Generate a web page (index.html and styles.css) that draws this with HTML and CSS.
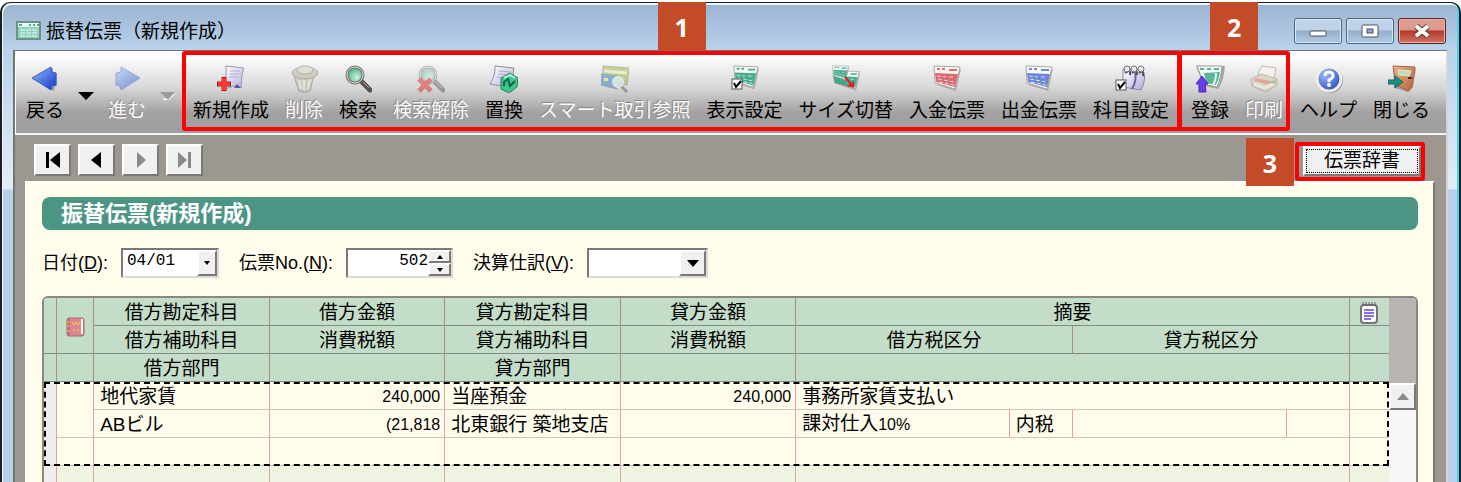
FILE: index.html
```html
<!DOCTYPE html>
<html lang="ja">
<head>
    <meta charset="UTF-8">
    <meta name="viewport" content="width=device-width, initial-scale=1.0">
    <title>振替伝票（新規作成）</title>
    <link rel="stylesheet" href="styles.css">
</head>
<body>

<!-- shared shapes for the toolbar icons -->
<svg class="defs" aria-hidden="true">
    <defs>
        <linearGradient id="blue" x1="0" y1="0" x2="1" y2="1">
            <stop offset="0" stop-color="#8fc4fb"/>
            <stop offset="1" stop-color="#1330c8"/>
        </linearGradient>
        <linearGradient id="paper" x1="0" y1="0" x2="1" y2="1">
            <stop offset="0" stop-color="#ffffff"/>
            <stop offset="1" stop-color="#b3abdc"/>
        </linearGradient>
        <linearGradient id="door" x1="0" y1="0" x2="1" y2="1">
            <stop offset="0" stop-color="#efb38b"/>
            <stop offset="1" stop-color="#b5603a"/>
        </linearGradient>
        <radialGradient id="glass" cx="0.6" cy="0.65" r="0.7">
            <stop offset="0" stop-color="#c9f7dd"/>
            <stop offset="1" stop-color="#3fa57b"/>
        </radialGradient>
        <radialGradient id="ball" cx="0.35" cy="0.3" r="0.8">
            <stop offset="0" stop-color="#9dbcf8"/>
            <stop offset="1" stop-color="#2746b8"/>
        </radialGradient>
        <symbol id="slip" viewBox="0 0 28 28">
            <path d="M2 2 L28 4 L23 26 L4 20Z" fill="#8d8a86" opacity=".6"/>
            <path d="M1 1 L27 2 L22 24 L2 18Z" fill="#fbfbf6" stroke="#aaa69c"/>
            <path d="M2 8 L25 9 L22 22 L3 17Z" fill="currentColor"/>
            <path d="M4 4h3M9 4h3M16 5h8" stroke="currentColor" stroke-width="2"/>
            <path d="M4 11l9 1M16 12h6M5 14l16 3M6 17l15 3" stroke="#fff" stroke-width="1" stroke-dasharray="4 2" opacity=".75"/>
        </symbol>
        <symbol id="check" viewBox="0 0 12 12">
            <rect x="1" y="1" width="10" height="10" fill="#fff" stroke="#555"/>
            <path d="M3 5l2 4 5-6" fill="none" stroke="#000" stroke-width="2"/>
        </symbol>
        <symbol id="lens" viewBox="0 0 28 28">
            <path d="M17 16 L26 25" stroke="#55524e" stroke-width="5" stroke-linecap="round"/>
            <path d="M19 17 L25 23" stroke="#aaa69e" stroke-width="1"/>
            <circle cx="11" cy="10" r="8" fill="url(#glass)" stroke="#77746d" stroke-width="3"/>
            <circle cx="11" cy="10" r="8" fill="none" stroke="#d8d6cf" stroke-width="1"/>
        </symbol>
    </defs>
</svg>

<div class="window">
    <header class="titlebar">
        <svg class="title-icon" viewBox="0 0 25 19">
            <rect x="1" y="1" width="23" height="17" fill="#8fd3bd" stroke="#6d8f89" stroke-width="2"/>
            <rect x="2" y="2" width="21" height="4" fill="#e8fbf5"/>
            <path d="M3 4h3M13 4h2M17 4h2M21 4h2" stroke="#4aa58a" stroke-width="2"/>
            <path d="M4 9h17M4 12h17M4 15h17" stroke="#e8fbf5" stroke-dasharray="5 1"/>
        </svg>
        <h1>振替伝票（新規作成）</h1>
        <div class="window-controls">
            <button type="button" aria-label="最小化">
                <svg viewBox="0 0 20 16"><rect x="2" y="8" width="16" height="5" rx="1" fill="#fff" stroke="#4b5563"/></svg>
            </button>
            <button type="button" aria-label="最大化">
                <svg viewBox="0 0 20 16"><rect x="2" y="2" width="16" height="12" rx="1" fill="#fff" stroke="#4b5563"/><rect x="7" y="6" width="6" height="4" fill="#8ba6c6" stroke="#4b5563"/></svg>
            </button>
            <button type="button" class="close" aria-label="ウィンドウを閉じる">
                <svg viewBox="0 0 20 16"><path d="M4 3l12 10M16 3L4 13" stroke="#5c3a3a" stroke-width="6"/><path d="M4 3l12 10M16 3L4 13" stroke="#fff" stroke-width="4"/></svg>
            </button>
        </div>
    </header>

    <div class="app">
        <nav class="toolbar" aria-label="ツールバー">
            <div class="group history">
                <button type="button" class="tool">
                    <svg viewBox="0 0 28 28"><path d="M2 14 L19 4 L22 3 L22 8 L26 8 L26 21 L24 21 L23 26Z" fill="#777" opacity=".6"/><path d="M1 13 L20 2 L21 7 L25 8 L25 20 L21 21 L20 25Z" fill="url(#blue)" stroke="#3d5bc4"/></svg>
                    <span>戻る</span>
                </button>
                <button type="button" class="drop" aria-label="戻る履歴"><svg viewBox="0 0 16 8"><path d="M0 0h16L8 8z" fill="#000"/></svg></button>
                <button type="button" class="tool" disabled>
                    <svg viewBox="0 0 28 28"><path d="M27 13 L8 2 L8 7 L3 8 L3 20 L7 21 L8 25Z" fill="url(#blue)" stroke="#3d5bc4"/></svg>
                    <span>進む</span>
                </button>
                <button type="button" class="drop" aria-label="進む履歴" disabled><svg viewBox="0 0 16 8"><path d="M2 8 L9 8 L16 1z" fill="#fff"/><path d="M0 0h15L8 8z" fill="#9b9b9b"/></svg></button>
            </div>

            <div class="group marked edit">
                <span class="badge">1</span>
                <button type="button" class="tool">
                    <svg viewBox="0 0 28 28"><path d="M9 1 L27 3 C24 10 25 16 24 23 L17 21 L8 24 C7 16 10 9 9 1Z" fill="url(#paper)" stroke="#9b98a2"/><path d="M13 6h10M13 9h9M12 12h9" stroke="#b4b1cc"/><path d="M17 23l3-4 4 4z" fill="#5a55a5"/><path d="M7 12v14M0 19h14" stroke="#9c1c1c" stroke-width="5"/><path d="M7 13v12M1 19h12" stroke="#f63c32" stroke-width="4"/></svg>
                    <span>新規作成</span>
                </button>
                <button type="button" class="tool" disabled>
                    <svg viewBox="0 0 28 28"><path d="M4 11 L24 10 L20 26 Q14 29 9 26Z" fill="#b9b29d" stroke="#6f6a5c"/><path d="M9 15l2 9M14 15v10M20 14l-2 10" stroke="#f4f1e6" stroke-width="2"/><ellipse cx="15" cy="8" rx="13" ry="6" fill="#b0aa94" stroke="#6f6a5c"/><ellipse cx="15" cy="5" rx="8" ry="4" fill="#d4cebc" stroke="#6f6a5c"/></svg>
                    <span>削除</span>
                </button>
                <button type="button" class="tool">
                    <svg viewBox="0 0 28 28"><use href="#lens"/></svg>
                    <span>検索</span>
                </button>
                <button type="button" class="tool" disabled>
                    <svg viewBox="0 0 28 28"><use href="#lens"/><path d="M2 14l12 12M14 14L2 26" stroke="#e01212" stroke-width="5"/></svg>
                    <span>検索解除</span>
                </button>
                <button type="button" class="tool">
                    <svg viewBox="0 0 28 28"><path d="M5 1 L24 3 L21 23 L0 19 C4 13 5 8 5 1Z" fill="url(#paper)" stroke="#8f8c98"/><path d="M9 6l11 1M8 9l11 1M7 12l8 1" stroke="#aaa7c6"/><path d="M11 13 L20 8 L28 13 L27 22 L19 28 L11 24Z" fill="#39c78d" stroke="#2b7f60"/><path d="M14 21v-4l4-3 2 7 5-5" fill="none" stroke="#17624a" stroke-width="2"/><path d="M14 13l6-3 5 3" fill="none" stroke="#b6f2d5" stroke-width="2"/></svg>
                    <span>置換</span>
                </button>
                <button type="button" class="tool" disabled>
                    <svg viewBox="0 0 28 28"><path d="M2 1 L28 3 L26 20 L2 17Z" fill="#8db32d" stroke="#6b7a3d"/><path d="M3 6l23 2" stroke="#e7f0b5" stroke-width="3"/><path d="M0 9 L17 11 L16 24 L0 20Z" fill="#1878bd" stroke="#2f628a"/><path d="M3 13h4v3H3z" fill="#ffe34d"/><path d="M20 21l6 6" stroke="#555" stroke-width="3"/><circle cx="17" cy="17" r="5" fill="#b8eed6" stroke="#eee" stroke-width="2"/></svg>
                    <span>スマート取引参照</span>
                </button>
                <button type="button" class="tool">
                    <svg class="green" viewBox="0 0 28 28"><use href="#slip" x="2" y="0" width="26" height="26"/><use href="#check" x="0" y="13" width="12" height="12"/></svg>
                    <span>表示設定</span>
                </button>
                <button type="button" class="tool">
                    <svg class="green" viewBox="0 0 28 28"><use href="#slip" x="6" y="5" width="22" height="22"/><path d="M1 10 L12 12 L18 22 L3 18Z" fill="#39a98b" stroke="#8b9d96"/><use href="#slip" x="0" y="0" width="17" height="17"/><path d="M13 12l6 7" stroke="#e21c1c" stroke-width="2"/><path d="M15 21l7 2 0-7z" fill="#e21c1c"/></svg>
                    <span>サイズ切替</span>
                </button>
                <button type="button" class="tool">
                    <svg class="red" viewBox="0 0 28 28"><use href="#slip"/></svg>
                    <span>入金伝票</span>
                </button>
                <button type="button" class="tool">
                    <svg class="blue" viewBox="0 0 28 28"><use href="#slip"/></svg>
                    <span>出金伝票</span>
                </button>
                <button type="button" class="tool">
                    <svg class="wide" viewBox="0 0 32 28"><path d="M8 4 L28 5 Q32 14 26 25 L8 22Z" fill="url(#paper)" stroke="#8784a0"/><path d="M20 6 Q22 16 17 24" fill="none" stroke="#6b6698" stroke-width="2"/><path d="M10 8q6-5 5 2M17 8q5-5 5 2M24 8q5-4 4 3" fill="none" stroke="#4f4d55" stroke-width="2"/><g fill="#eceaf0" stroke="#706d76"><circle cx="12" cy="4" r="3"/><circle cx="19" cy="4" r="3"/><circle cx="26" cy="4" r="3"/></g><use href="#check" x="0" y="14" width="12" height="12"/></svg>
                    <span>科目設定</span>
                </button>
            </div>

            <div class="group marked save">
                <span class="badge">2</span>
                <button type="button" class="tool">
                    <svg class="wide" viewBox="0 0 32 28"><path d="M2 1 L31 1 Q30 16 24 24 L10 21Z" fill="#aaa7a0"/><path d="M3 1 L28 1 Q27 14 23 22 L10 19Z" fill="#f5fbf7" stroke="#9c9c94"/><path d="M10 8 L26 7 Q25 14 22 20 L12 18Z" fill="#59b498"/><path d="M6 4h4M13 4h4M20 4h5" stroke="#59b498" stroke-width="2"/><path d="M22 8q0 7-3 12" stroke="#e8f8f0" stroke-width="2" fill="none"/><path d="M8 11 L14 19 L11 19 L12 27 L5 27 L5 19 L2 19Z" fill="#6a3cf0" stroke="#4a27b5"/></svg>
                    <span>登録</span>
                </button>
                <button type="button" class="tool" disabled>
                    <svg viewBox="0 0 28 28"><path d="M8 8 L12 1 L26 3 L24 14 L11 14Z" fill="#fffaf0" stroke="#8e7b68"/><path d="M1 14 L11 9 L27 14 L27 20 L16 27 L2 21Z" fill="#d6c6ac" stroke="#8e7b68"/><path d="M5 13l16 3 3 2-8 1-12-3z" fill="#e8643c"/><path d="M4 19 L15 23 L25 18" fill="none" stroke="#fff7dd" stroke-width="3"/><circle cx="24" cy="17" r="2" fill="#58b34a"/></svg>
                    <span>印刷</span>
                </button>
            </div>

            <div class="group">
                <button type="button" class="tool">
                    <svg viewBox="0 0 28 28"><circle cx="15" cy="15" r="13" fill="#8c8a88"/><circle cx="14" cy="14" r="12" fill="url(#ball)" stroke="#efeeea" stroke-width="3"/><path d="M10 11q0-4 4-4t4 4q0 2-4 4v2" fill="none" stroke="#fff" stroke-width="3"/><circle cx="14" cy="20" r="2" fill="#fff"/></svg>
                    <span>ヘルプ</span>
                </button>
                <button type="button" class="tool">
                    <svg viewBox="0 0 28 28"><path d="M5 1 L28 4 L25 22 L21 27 L6 23Z" fill="#8c8078" opacity=".6"/><path d="M5 1 L27 2 L24 22 L20 26 L8 20Z" fill="url(#door)" stroke="#9b654b"/><path d="M10 5 L23 6 L21 11 L11 10Z" fill="#b3e3ba" stroke="#f6dcc0"/><path d="M20 13h4" stroke="#5a2c18" stroke-width="2"/><path d="M0 15 L7 15 L7 11 L15 17 L7 23 L7 19 L0 19Z" fill="#1c8d83" stroke="#0f6a61"/></svg>
                    <span>閉じる</span>
                </button>
            </div>
        </nav>

        <div class="record-bar">
            <button type="button" class="raised" aria-label="先頭"><svg viewBox="0 0 18 18"><path d="M2 1h3v16H2zM16 1v16L6 9z"/></svg></button>
            <button type="button" class="raised" aria-label="前へ"><svg viewBox="0 0 18 18"><path d="M13 1v16L3 9z"/></svg></button>
            <button type="button" class="raised" aria-label="次へ" disabled><svg viewBox="0 0 18 18"><path d="M5 1v16l9-8z"/></svg></button>
            <button type="button" class="raised" aria-label="最終" disabled><svg viewBox="0 0 18 18"><path d="M2 1v16l9-8zM12 1h3v16h-3z"/></svg></button>
            <div class="dictionary marked">
                <span class="badge side">3</span>
                <button type="button" class="raised"><span>伝票辞書</span></button>
            </div>
        </div>

        <main class="sheet">
            <h2>振替伝票(新規作成)</h2>

            <form class="fields">
                <label for="date">日付(<u>D</u>):</label>
                <div class="box date">
                    <input type="text" id="date" value="04/01">
                    <button type="button" class="raised" aria-label="カレンダー"><svg viewBox="0 0 6 4"><path d="M0 0h6L3 4z"/></svg></button>
                </div>
                <label for="number">伝票No.(<u>N</u>):</label>
                <div class="box number">
                    <input type="text" id="number" value="502">
                    <div class="spin">
                        <button type="button" class="raised" aria-label="増やす"><svg viewBox="0 0 6 4"><path d="M0 4h6L3 0z"/></svg></button>
                        <button type="button" class="raised" aria-label="減らす"><svg viewBox="0 0 6 4"><path d="M0 0h6L3 4z"/></svg></button>
                    </div>
                </div>
                <label for="closing">決算仕訳(<u>V</u>):</label>
                <div class="box closing">
                    <select id="closing"><option></option></select>
                    <span class="raised arrow"><svg viewBox="0 0 12 7"><path d="M0 0h12L6 7z"/></svg></span>
                </div>
            </form>

            <div class="grid">
                <table>
                    <colgroup>
                        <col class="c-mark"><col class="c-icon"><col class="c-name"><col class="c-name"><col class="c-name"><col class="c-name">
                        <col class="c-tax"><col class="c-type"><col class="c-tax"><col class="c-type"><col class="c-memo">
                    </colgroup>
                    <thead>
                        <tr>
                            <th rowspan="2"></th>
                            <th rowspan="2">
                                <svg class="book" viewBox="0 0 19 20"><rect x="1" y="1" width="17" height="18" rx="2" fill="#dc8790" stroke="#a96670"/><path d="M16 2v15" stroke="#fff" stroke-width="2"/><path d="M3 2v16" stroke="#a34f5d"/><path d="M1 5h3M1 9h3M1 14h3" stroke="#ecc95f"/><path d="M6 5l2 3 2-3 2 3 2-3M7 13h2M11 13h2" stroke="#f5cd4f" fill="none"/></svg>
                            </th>
                            <th>借方勘定科目</th>
                            <th>借方金額</th>
                            <th>貸方勘定科目</th>
                            <th>貸方金額</th>
                            <th colspan="4">摘要</th>
                            <th>
                                <svg class="memo" viewBox="0 0 18 22"><rect x="1" y="3" width="16" height="18" rx="3" fill="#fff" stroke="#77727c" stroke-width="2"/><path d="M3 0v4M6 0v4M9 0v4M12 0v4M15 0v4" stroke="#66616a"/><path d="M4 8h10M4 11h10M4 14h10M4 17h7" stroke="#8274f0" stroke-width="2"/></svg>
                            </th>
                        </tr>
                        <tr>
                            <th>借方補助科目</th>
                            <th>消費税額</th>
                            <th>貸方補助科目</th>
                            <th>消費税額</th>
                            <th colspan="2">借方税区分</th>
                            <th colspan="2">貸方税区分</th>
                            <th></th>
                        </tr>
                        <tr>
                            <th></th>
                            <th></th>
                            <th>借方部門</th>
                            <th></th>
                            <th>貸方部門</th>
                            <th></th>
                            <th colspan="4"></th>
                            <th></th>
                        </tr>
                    </thead>
                    <tbody class="current">
                        <tr>
                            <td class="mark" rowspan="3"></td>
                            <td rowspan="2"></td>
                            <td>地代家賃</td>
                            <td class="amount">240,000</td>
                            <td>当座預金</td>
                            <td class="amount">240,000</td>
                            <td colspan="4">事務所家賃支払い</td>
                            <td></td>
                        </tr>
                        <tr>
                            <td>ABビル</td>
                            <td class="amount">(21,818</td>
                            <td>北東銀行 築地支店</td>
                            <td></td>
                            <td>課対仕入<span class="rate">10%</span></td>
                            <td>内税</td>
                            <td></td>
                            <td></td>
                            <td></td>
                        </tr>
                        <tr>
                            <td></td>
                            <td></td>
                            <td></td>
                            <td></td>
                            <td></td>
                            <td colspan="4"></td>
                            <td></td>
                        </tr>
                    </tbody>
                    <tbody class="next">
                        <tr>
                            <td class="mark"></td>
                            <td></td>
                            <td></td>
                            <td></td>
                            <td></td>
                            <td></td>
                            <td colspan="4"></td>
                            <td></td>
                        </tr>
                    </tbody>
                </table>
                <div class="scroll">
                    <button type="button" class="raised" aria-label="上へ" disabled><svg viewBox="0 0 12 7"><path d="M0 7h12L6 0z"/></svg></button>
                </div>
            </div>
        </main>
    </div>
</div>

</body>
</html>
```
FILE: styles.css
```css
* {
    box-sizing: border-box;
}

body {
    margin: 0;
    padding-top: 2px;
    height: 100vh;
    overflow: hidden;
    background-color: #fff;
    color: #000;
    font-family: "Liberation Sans", "Noto Sans CJK JP", sans-serif;
    font-size: 19px;
    line-height: 22px;
}

button, input, select {
    margin: 0;
    padding: 0;
    border: none;
    background: none;
    color: inherit;
    font: inherit;
}

.defs {
    position: absolute;
    width: 0;
    height: 0;
}

.window {
    display: flex;
    flex-direction: column;
    height: 100%;
    padding: 0 10px;
    border: 2px solid #1b1e22;
    border-top-width: 1px;
    border-bottom: none;
    border-radius: 10px 10px 0 0;
    background: linear-gradient(#9ab3d0, #b8d2eb 46px, #e2edf8 186px, #b9d0ea 187px);
    box-shadow: inset 1px 2px 0 #f2f7fb, inset -2px 0 0 #45d5f0;
}

/* title bar */
.titlebar {
    display: flex;
    align-items: center;
    height: 47px;
    padding: 8px 3px 0 4px;
}

.title-icon {
    width: 25px;
    height: 19px;
    margin-right: 5px;
}

h1 {
    margin: 0;
    padding-top: 3px;
    font-size: 19px;
    font-weight: 400;
}

.window-controls {
    display: flex;
    gap: 4px;
    margin-left: auto;
}

.window-controls button {
    display: flex;
    align-items: center;
    justify-content: center;
    width: 48px;
    height: 26px;
    border: 1px solid #53657d;
    border-radius: 3px;
    background: linear-gradient(#bfd2e7 45%, #94aecb 50%, #b3cbe5);
    box-shadow: inset 0 0 0 1px #d9e6f3;
}

.window-controls .close {
    border-color: #5a1f25;
    background: linear-gradient(#dd9b90 45%, #b5392b 50%, #d0735c);
    box-shadow: inset 0 0 0 1px #e9b6ab;
}

.window-controls svg {
    width: 20px;
    height: 16px;
}

.app {
    display: flex;
    flex: 1;
    flex-direction: column;
    min-height: 0;
    margin: 0 1px;
    border: 2px solid #77746f;
    border-top-width: 1px;
    border-right-color: #d8d6d2;
    border-bottom: none;
    background-color: #9c9891;
}

/* toolbar */
.toolbar {
    display: flex;
    padding-bottom: 2px;
    border-left: 1px solid #fff;
    border-bottom: 2px solid #f4f4f4;
    background: linear-gradient(#fff 5%, #d8d7d7 45%, #a3a1a1 75%, #a09e9e);
}

.group {
    position: relative;
    display: flex;
    gap: 16px;
    padding: 10px 6px 6px;
    border: 4px solid transparent;
}

.history {
    gap: 14px;
    padding-right: 2px;
}

.edit {
    padding-right: 8px;
    padding-left: 7px;
}

.save {
    margin-left: -3px;
    padding-left: 9px;
    padding-right: 3px;
}

.marked {
    border: 4px solid #f00;
    border-radius: 3px;
}

.badge {
    position: absolute;
    bottom: 100%;
    left: 50%;
    width: 48px;
    height: 48px;
    margin-bottom: 5px;
    transform: translateX(-50%);
    background-color: #c44b28;
    color: #fff;
    font-family: "Open Sans", sans-serif;
    font-size: 25px;
    font-weight: 700;
    line-height: 50px;
    text-align: center;
}

.tool {
    display: flex;
    flex-direction: column;
    align-items: center;
    gap: 6px;
    white-space: nowrap;
}

.tool svg {
    width: 28px;
    height: 28px;
}

.tool span {
    padding-top: 1px;
    line-height: 21px;
}

.tool .wide {
    width: 32px;
}

.tool:disabled svg {
    opacity: 0.45;
}

.tool:disabled span {
    color: #fafafa;
    text-shadow: -1px -1px 0 #888686;
}

.green {
    color: #45ad91;
}

.red {
    color: #dc6a70;
}

.blue {
    color: #6c85d6;
}

.drop {
    display: flex;
    align-items: center;
    padding-top: 6px;
}

.drop svg {
    width: 16px;
    height: 8px;
}

/* record navigation */
.record-bar {
    display: flex;
    align-items: flex-start;
    gap: 7px;
    padding: 7px 21px 0 19px;
}

.raised {
    display: flex;
    align-items: center;
    justify-content: center;
    border: 2px solid;
    border-color: #fff #7b7977 #7b7977 #fff;
    background-color: #f0f0f0;
}

.raised svg {
    fill: #000;
}

.raised:disabled svg {
    fill: #8b8b8b;
}

.record-bar > .raised {
    width: 37px;
    height: 32px;
    margin-top: 2px;
}

.record-bar svg {
    width: 18px;
    height: 18px;
}

.dictionary {
    position: relative;
    margin-left: auto;
    padding: 0 0 1px 4px;
}

.dictionary .raised {
    height: 30px;
    padding: 2px 1px;
}

.dictionary .raised span {
    padding: 0 17px;
    border: 1px dotted #000;
}

.badge.side {
    top: -8px;
    right: 100%;
    bottom: auto;
    left: auto;
    z-index: 1;
    margin: 0 5px 0 0;
    transform: none;
}

/* slip */
.sheet {
    flex: 1;
    min-height: 0;
    margin: 0 11px 0 10px;
    padding: 14px 15px 0;
    border: 2px solid #fff;
    border-right-color: #7b7977;
    border-bottom: none;
    background-color: #fffcec;
}

h2 {
    margin: 0;
    padding: 0 19px;
    border-radius: 8px;
    background-color: #4c9585;
    color: #fff;
    font-size: 22px;
    font-weight: 700;
    line-height: 33px;
}

.fields {
    display: flex;
    align-items: center;
    padding: 18px 0;
    font-size: 18px;
}

.fields label {
    margin-right: 13px;
}

.box {
    position: relative;
    display: flex;
    height: 30px;
    margin-right: 20px;
    border: 2px solid;
    border-color: #7b7977 #dcdad6 #dcdad6 #7b7977;
    background-color: #fff;
}

.box input {
    flex: 1;
    min-width: 0;
    padding: 0 0 4px 4px;
    font-family: "Liberation Mono", monospace;
    font-size: 16px;
}

.date {
    width: 98px;
}

.date .raised {
    width: 20px;
}

.number {
    width: 107px;
}

.number input {
    text-align: right;
}

.spin {
    display: flex;
    flex-direction: column;
    width: 23px;
}

.spin .raised {
    flex: 1;
}

.fields button svg {
    width: 6px;
    height: 4px;
}

.closing {
    width: 121px;
}

.closing select {
    width: 100%;
    appearance: none;
}

.arrow {
    position: absolute;
    top: 0;
    right: 0;
    bottom: 0;
    width: 27px;
    pointer-events: none;
}

.arrow svg, .scroll svg {
    width: 12px;
    height: 7px;
}

/* entry grid */
.grid {
    display: flex;
    overflow: hidden;
    border: 2px solid #8c8782;
    border-bottom: none;
    border-radius: 6px 6px 0 0;
}

table {
    flex: 1;
    table-layout: fixed;
    width: 100%;
    border-collapse: separate;
    border-spacing: 0;
}

.c-mark { width: 13px; }
.c-icon { width: 37px; }
.c-name { width: 175px; }
.c-tax { width: 213px; }
.c-type { width: 63px; }
.c-memo { width: 39px; }

th, td {
    height: 28px;
    padding: 2px 0 0;
    border-right: 1px solid #e0a596;
    border-bottom: 1px solid #cdc7ba;
    font-weight: 400;
    white-space: nowrap;
}

th {
    border-right-color: #ab8c7e;
    border-bottom-color: #7c9080;
    background-color: #c4ddc8;
    text-align: center;
}

th:last-child, td:last-child {
    border-right: none;
}

td {
    padding: 2px 4px 0 6px;
    background-color: #fffcec;
}

.amount {
    font-size: 16px;
    text-align: right;
}

.rate {
    font-size: 16px;
}

.mark {
    background-color: #efefef;
}

.current {
    outline: 2px dashed #000;
    outline-offset: -2px;
}

.next td:not(.mark) {
    background-color: #eff3e2;
}

.book {
    display: block;
    width: 19px;
    height: 20px;
    margin: 0 auto;
}

.memo {
    display: block;
    width: 18px;
    height: 22px;
    margin: 0 auto;
}

.scroll {
    width: 27px;
    padding-top: 85px;
    background: linear-gradient(#b9b4b0 85px, #f6f6f6 85px);
}

.scroll .raised {
    width: 27px;
    height: 27px;
}
```
